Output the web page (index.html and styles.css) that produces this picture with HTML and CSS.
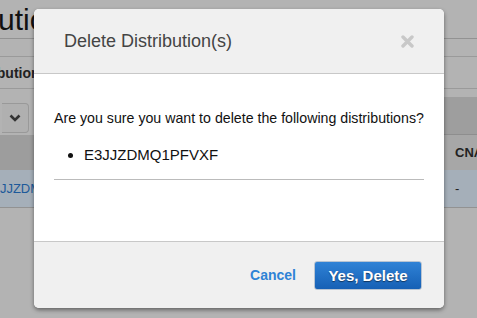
FILE: index.html
```html
<!DOCTYPE html>
<html>
<head>
    <title>Delete Distribution(s)</title>
    <link rel="stylesheet" href="styles.css">
</head>
<body>
    <div class="page">
        <div class="title-bar">
            <h1>Distributions</h1>
        </div>
        <div class="tabs"></div>
        <div class="subhead">
            <span>Distributions</span>
        </div>
        <div class="toolbar">
            <div class="toolbar-left">
                <div class="dropdown">
                    <svg width="12" height="8" viewBox="0 0 12 8"><path d="M1.5 1.5 L6 6 L10.5 1.5" fill="none" stroke="#333" stroke-width="2.6"/></svg>
                </div>
            </div>
            <div class="toolbar-fill"></div>
        </div>
        <div class="table">
            <div class="thead">
                <div class="cell id-col"></div>
                <div class="cell mid-col"></div>
                <div class="cell cname-col">CNAME</div>
            </div>
            <div class="trow">
                <div class="cell id-col"><a>E3JJZDMQ1PFVXF</a></div>
                <div class="cell mid-col"></div>
                <div class="cell cname-col">-</div>
            </div>
        </div>
    </div>

    <div class="modal">
        <div class="modal-header">
            <h3>Delete Distribution(s)</h3>
            <svg class="close" width="13" height="13" viewBox="0 0 13 13">
                <path d="M2 2 L11 11 M11 2 L2 11" stroke="#c8c8c8" stroke-width="3.4" stroke-linecap="round"/>
            </svg>
        </div>
        <div class="modal-body">
            <p>Are you sure you want to delete the following distributions?</p>
            <ul>
                <li>E3JJZDMQ1PFVXF</li>
            </ul>
            <hr>
        </div>
        <div class="modal-footer">
            <a class="cancel">Cancel</a>
            <button class="confirm">Yes, Delete</button>
        </div>
    </div>
</body>
</html>
```

FILE: styles.css
```css
body {
    margin: 0;
    padding: 0;
    font-family: Arial, "Liberation Sans", sans-serif;
    background-color: #b3b3b3;
    width: 477px;
    height: 318px;
    overflow: hidden;
    position: relative;
}

.page {
    width: 477px;
    height: 318px;
    overflow: hidden;
    background-color: #b3b3b3;
}

.title-bar {
    height: 38px;
    border-bottom: 1px solid #929292;
    overflow: hidden;
}

.title-bar h1 {
    margin: 0 0 0 -87px;
    font-size: 30px;
    font-weight: normal;
    line-height: 40px;
    color: #111;
    white-space: nowrap;
}

.tabs {
    height: 17px;
    border-bottom: 1px solid #9a9a9a;
}

.subhead {
    height: 31px;
    border-bottom: 1px solid #9a9a9a;
    overflow: hidden;
    white-space: nowrap;
    line-height: 31px;
}

.subhead span {
    display: inline-block;
    margin-left: -39px;
    font-size: 14px;
    font-weight: bold;
    color: #222;
}

.toolbar {
    height: 46px;
    display: flex;
}

.toolbar-left {
    flex: 1;
    padding-top: 14px;
}

.dropdown {
    width: 26px;
    height: 28px;
    margin-left: 2px;
    border: 1px solid #999;
    border-left: none;
    border-radius: 0 4px 4px 0;
    background-color: #b0b0b0;
    display: flex;
    align-items: center;
    justify-content: center;
}

.toolbar-fill {
    width: 33px;
    margin-top: 8px;
    background-color: #9e9e9e;
    border-bottom: 1px solid #8e8e8e;
}

.table .thead,
.table .trow {
    display: flex;
}

.thead {
    height: 35px;
    background-color: #9d9d9d;
}

.thead .cname-col {
    background-color: #a7a7a7;
    font-weight: bold;
    color: #222;
}

.trow {
    height: 37px;
    background-color: #a5afb9;
    border-bottom: 1px solid #929292;
}

.cell {
    display: flex;
    align-items: center;
    font-size: 13px;
    overflow: hidden;
    white-space: nowrap;
}

.id-col {
    width: 36px;
}

.id-col a {
    color: #1d5a9a;
    margin-left: -16px;
    flex-shrink: 0;
}

.mid-col {
    flex: 1;
}

.cname-col {
    width: 22px;
    padding-left: 11px;
}

.trow .cname-col {
    color: #222;
}

/* dialog */
.modal {
    position: absolute;
    left: 34px;
    top: 9px;
    width: 410px;
    height: 299px;
    border-radius: 5px;
    overflow: hidden;
    box-shadow: 0 2px 4px rgba(0, 0, 0, 0.45);
    display: flex;
    flex-direction: column;
    background-color: #fff;
}

.modal-header {
    height: 64px;
    flex-shrink: 0;
    background-color: #f0f0f0;
    border-bottom: 1px solid #c8c8c8;
    display: flex;
    align-items: center;
    justify-content: space-between;
    padding: 0 30px 0 30px;
}

.modal-header h3 {
    margin: 0;
    font-size: 18px;
    font-weight: normal;
    color: #444;
}

.modal-body {
    height: 167px;
    flex-shrink: 0;
    padding: 0 20px;
    box-sizing: border-box;
}

.modal-body p {
    margin: 36px 0 0;
    font-size: 14.2px;
    white-space: nowrap;
    color: #111;
}

.modal-body ul {
    margin: 20px 0 0;
    padding-left: 30px;
    font-size: 15px;
    color: #111;
}

.modal-body hr {
    margin: 16px 0 0;
    border: none;
    border-top: 1px solid #bbb;
}

.modal-footer {
    flex: 1;
    background-color: #f0f0f0;
    border-top: 1px solid #c8c8c8;
    display: flex;
    align-items: center;
    justify-content: flex-end;
    padding: 0 22px 0 0;
    gap: 18px;
}

.cancel {
    color: #2e83d6;
    font-weight: bold;
    font-size: 14px;
}

.confirm {
    width: 108px;
    height: 29px;
    border: 1px solid #b8c4d2;
    border-radius: 3px;
    background: linear-gradient(#2f82d6, #1660b5);
    color: white;
    font-family: Arial, "Liberation Sans", sans-serif;
    font-weight: bold;
    font-size: 15px;
    text-shadow: 0 1px 1px rgba(0, 0, 0, 0.5);
}
```
